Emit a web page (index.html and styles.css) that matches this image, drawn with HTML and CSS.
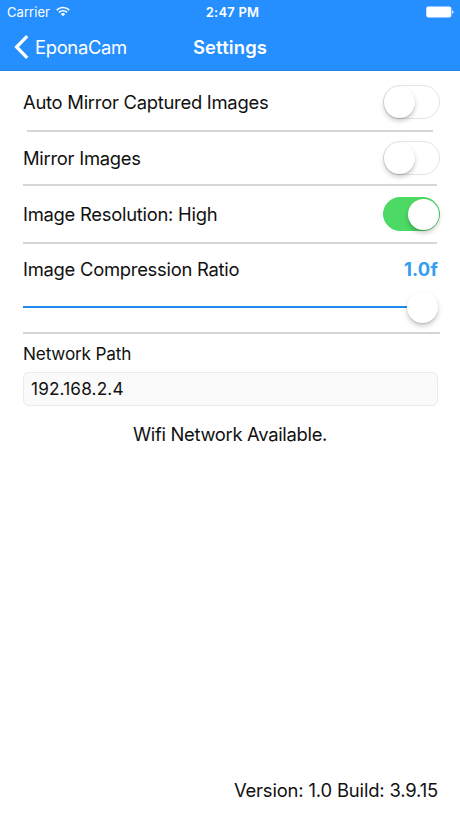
FILE: index.html
```html
<!DOCTYPE html>
<html lang="en">
<head>
<meta charset="utf-8">
<title>Settings</title>
<link rel="stylesheet" href="styles.css">
</head>
<body>
<header class="header">
  <div class="status">
    <div class="status-left">
      <span class="carrier">Carrier</span>
      <svg class="wifi" width="14" height="11" viewBox="0 0 14 11" fill="none" stroke="#fff" stroke-width="1.6">
        <path d="M.7 4.1a9 9 0 0 1 12.6 0"/>
        <path d="M2.9 6.4a5.8 5.8 0 0 1 8.2 0"/>
        <path d="M7 10.3 4.8 8.1a3.1 3.1 0 0 1 4.4 0z" fill="#fff" stroke="none"/>
      </svg>
    </div>
    <span class="time">2:47 PM</span>
    <svg class="battery" width="28" height="12" viewBox="0 0 28 12" fill="#fff">
      <rect x=".3" y=".4" width="25" height="11" rx="1.8"/>
      <path d="M26.2 4.2c1.7.4 1.7 3.2 0 3.6z"/>
    </svg>
  </div>
  <nav class="nav">
    <a class="back">
      <svg width="15" height="24" viewBox="0 0 15 24" fill="none" stroke="#fff" stroke-width="3.3"><path d="M13.2 1.2 2.6 12l10.6 10.8"/></svg>
      <span class="back-label">EponaCam</span>
    </a>
    <h1 class="title">Settings</h1>
  </nav>
</header>
<main class="content">
  <div class="row row-auto"><span class="label">Auto Mirror Captured Images</span><span class="switch"><i class="knob"></i></span></div>
  <hr class="line inset">
  <div class="row row-mirror"><span class="label">Mirror Images</span><span class="switch"><i class="knob"></i></span></div>
  <hr class="line">
  <div class="row row-resolution"><span class="label">Image Resolution: High</span><span class="switch on"><i class="knob"></i></span></div>
  <hr class="line">
  <div class="row row-ratio"><span class="label">Image Compression Ratio</span><span class="value">1.0f</span></div>
  <div class="slider"><span class="track"></span><i class="knob"></i></div>
  <hr class="line wide">
  <div class="path-label">Network Path</div>
  <div class="field"><span class="field-text">192.168.2.4</span></div>
  <p class="wifi-note">Wifi Network Available.</p>
</main>
<footer class="version">Version: 1.0 Build: 3.9.15</footer>
</body>
</html>
```
FILE: styles.css
```css
* { box-sizing: border-box; }

body {
  margin: 0;
  height: 818px;
  display: flex;
  flex-direction: column;
  background: #fff;
  color: #111;
  font-family: Inter, "Liberation Sans", sans-serif;
  font-size: 18.4px;
  line-height: 24px;
  overflow: hidden;
}

svg { display: block; }

.header {
  height: 71px;
  background: #268fff;
  border-bottom: 1px solid #2585ea;
  color: #fff;
}

.status {
  height: 24px;
  padding: 0 6px 0 7px;
  display: grid;
  grid-template-columns: 1fr auto 1fr;
  align-items: center;
  font-size: 13px;
}

.status-left { display: flex; align-items: center; gap: 6px; }
.carrier { letter-spacing: .05px; }
.wifi { margin-top: -2px; }
.time { font-weight: 600; letter-spacing: .2px; margin-left: 4px; }
.battery { justify-self: end; }

.nav {
  height: 46px;
  padding: 0 14px;
  display: grid;
  grid-template-columns: 1fr auto 1fr;
  align-items: center;
}

.back { display: flex; align-items: center; gap: 6px; }
.back-label { letter-spacing: -.33px; }
.title { margin: 0; font-size: 18.4px; font-weight: 600; letter-spacing: .15px; }

.content { padding: 0 20px 0 23px; }

.row {
  display: flex;
  justify-content: space-between;
  align-items: center;
}

.label { letter-spacing: -.26px; }

.row-auto { height: 59px; padding-top: 3px; }
.row-mirror { height: 52px; }
.row-resolution { height: 56px; }
.row-ratio { height: 50px; padding-right: 2px; }

.line {
  height: 2px;
  margin: 0 3px 0 0;
  border: 0;
  background: #d5d5d5;
}
.inset { margin: 0 7px 0 4px; }
.wide { margin: 0; }

.switch {
  width: 57px;
  height: 34px;
  padding: 0;
  border: 1.5px solid #e3e3e3;
  border-radius: 17px;
  display: flex;
  align-items: center;
}
.knob {
  width: 31px;
  height: 31px;
  flex: none;
  border-radius: 50%;
  background: #fff;
  box-shadow: 0 3px 5px rgba(0, 0, 0, .2), 0 1px 1px rgba(0, 0, 0, .12);
}
.on {
  justify-content: flex-end;
  border-color: #4cd964;
  background: #4cd964;
}

.value { color: #339eef; font-weight: 700; letter-spacing: .2px; }

.slider {
  height: 38px;
  padding: 0 2px 12px 0;
  display: flex;
  align-items: center;
}
.track { flex: 1; height: 2px; background: #1d8cee; }

.path-label { margin-top: 8px; font-size: 17.2px; letter-spacing: -.17px; }

.field {
  height: 34px;
  margin: 6px 2px 0 0;
  padding: 0 7px;
  display: flex;
  align-items: center;
  border: 1px solid #ebebeb;
  border-radius: 6px;
  background: #fafafa;
  font-size: 17.2px;
  letter-spacing: .15px;
}

.wifi-note { margin: 16px 0 0 -3px; text-align: center; letter-spacing: -.3px; }

.version { margin: auto 22px 16px; text-align: right; letter-spacing: -.15px; }
```
